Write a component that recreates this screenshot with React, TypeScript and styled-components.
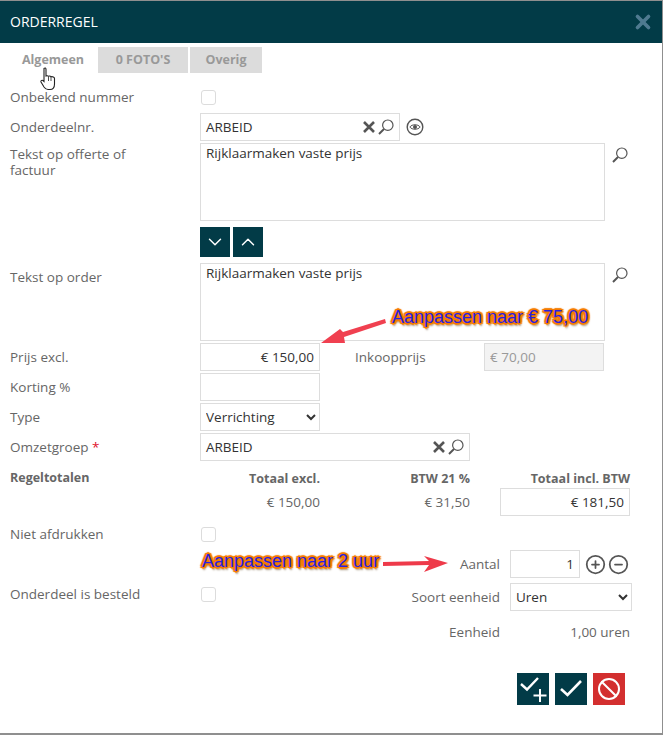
import React from 'react';

import { Ban, ChevronDown, ChevronUp, CirclePlus, CircleMinus, X } from 'lucide-react';
import { createGlobalStyle, styled } from 'styled-components';

const GlobalStyle = createGlobalStyle`
  html, body {
    margin: 0;
    padding: 0;
    background: #fff;
  }
  * {
    box-sizing: border-box;
  }
`;

const Dialog = styled.div`
  position: relative;
  width: 663px;
  height: 735px;
  overflow: hidden;
  background: #fff;
  border-top: 1px solid #8f8f8f;
  border-right: 1px solid #8f8f8f;
  border-bottom: 2px solid #8f8f8f;
  font-family: 'Open Sans', 'Noto Sans', sans-serif;
  font-size: 13.5px;
  color: #666;
`;

const Header = styled.div`
  height: 42px;
  background: #023b47;
  color: #fff;
  display: flex;
  align-items: center;
  justify-content: space-between;
  padding: 0 8px 1px 10px;
  font-size: 14px;
`;

const CloseIcon = styled(X)`
  color: #4f7a90;
`;

const Tabs = styled.div`
  display: flex;
  gap: 2px;
  padding: 4px 0 0 10px;
  height: 40px;
`;

const Tab = styled.div<{ $active?: boolean; $w: number }>`
  width: ${({ $w }) => $w}px;
  height: 26px;
  padding-bottom: 1px;
  display: flex;
  align-items: center;
  justify-content: center;
  font-size: 12.5px;
  font-weight: 700;
  color: #999;
  background: ${({ $active }) => ($active ? '#fff' : '#dcdcdc')};
`;

const Form = styled.div`
  display: flex;
  flex-direction: column;
`;

const Row = styled.div<{ $top?: number; $h?: number }>`
  display: flex;
  align-items: center;
  height: ${({ $h }) => $h ?? 28}px;
  margin-top: ${({ $top }) => $top ?? 2}px;
`;

const TallRow = styled.div<{ $top: number }>`
  display: flex;
  align-items: flex-start;
  margin-top: ${({ $top }) => $top}px;
`;

const Label = styled.div<{ $bold?: boolean }>`
  flex: 0 0 200px;
  padding-left: 10px;
  line-height: 16px;
  font-weight: ${({ $bold }) => ($bold ? 700 : 400)};
  font-size: ${({ $bold }) => ($bold ? '12.5px' : '13.5px')};
`;

const TallLabel = styled(Label)<{ $pad: number }>`
  padding-top: ${({ $pad }) => $pad}px;
  padding-right: 50px;
`;

const RaisedLabel = styled(Label)`
  margin-bottom: 6px;
`;

const Required = styled.span`
  color: #e0102a;
`;

const Checkbox = styled.span<{ $raised?: boolean }>`
  width: 15px;
  height: 15px;
  border: 1px solid #dcdcdc;
  border-radius: 3px;
  margin-left: 1px;
  margin-bottom: ${({ $raised }) => ($raised ? 6 : 0)}px;
`;

const Input = styled.input<{ $w: number; $disabled?: boolean }>`
  width: ${({ $w }) => $w}px;
  height: 28px;
  padding: 0 5px;
  border: 1px solid #ddd;
  outline: none;
  text-align: ${({ $disabled }) => ($disabled ? 'left' : 'right')};
  font: inherit;
  color: ${({ $disabled }) => ($disabled ? '#999' : '#333')};
  background: ${({ $disabled }) => ($disabled ? '#f3f3f3' : '#fff')};
`;

const LookupBox = styled.div<{ $w: number }>`
  width: ${({ $w }) => $w}px;
  height: 28px;
  padding: 0 5px;
  border: 1px solid #ddd;
  display: flex;
  align-items: center;
  gap: 3px;
  color: #333;
`;

const LookupValue = styled.span`
  flex: 1;
`;

const TextArea = styled.textarea`
  width: 405px;
  height: 78px;
  padding: 0 5px;
  border: 1px solid #ddd;
  outline: none;
  resize: none;
  font: inherit;
  line-height: 18px;
  color: #333;
`;

const Select = styled.select<{ $w: number }>`
  width: ${({ $w }) => $w}px;
  height: 28px;
  padding: 0 1px;
  border: 1px solid #ddd;
  border-radius: 0;
  outline: none;
  background: #fff;
  font: inherit;
  color: #333;
`;

const IconSlot = styled.span<{ $left?: number; $top?: number }>`
  display: inline-flex;
  color: #555;
  margin-left: ${({ $left }) => $left ?? 0}px;
  margin-top: ${({ $top }) => $top ?? 0}px;
`;

const MoveButtons = styled.div`
  display: flex;
  gap: 3px;
  margin: 6px 0 6px 200px;
`;

const DarkButton = styled.button<{ $size: number; $red?: boolean }>`
  width: ${({ $size }) => $size}px;
  height: ${({ $size }) => $size}px;
  padding: 0;
  border: none;
  display: flex;
  align-items: center;
  justify-content: center;
  color: #fff;
  background: ${({ $red }) => ($red ? '#d32f2f' : '#023b47')};
`;

const InlineLabel = styled.span`
  width: 164px;
  padding-left: 35px;
`;

const Cell = styled.div<{ $w: number; $bold?: boolean }>`
  width: ${({ $w }) => $w}px;
  text-align: right;
  font-weight: ${({ $bold }) => ($bold ? 700 : 400)};
  font-size: ${({ $bold }) => ($bold ? '12.5px' : '13.5px')};
`;

const EndLabel = styled.div`
  flex: 1;
  text-align: right;
  padding-right: 10px;
`;

const SideField = styled.div`
  width: 150px;
  margin-right: 2px;
  display: flex;
  align-items: center;
  gap: 3px;
`;

const EndValue = styled.div`
  width: 120px;
  text-align: right;
`;

const Actions = styled.div`
  display: flex;
  justify-content: flex-end;
  gap: 6px;
  margin: 27px 37px 0 0;
`;

const Annotation = styled.div<{ $x: number; $y: number }>`
  position: absolute;
  left: ${({ $x }) => $x}px;
  top: ${({ $y }) => $y}px;
  font-family: 'Liberation Sans', Arial, sans-serif;
  font-size: 18px;
  line-height: 20px;
  white-space: nowrap;
  color: #2a1fe0;
  text-shadow:
    1px 0 0 #f57c00, -1px 0 0 #f57c00, 0 1px 0 #f57c00, 0 -1px 0 #f57c00,
    1px 1px 0 #f57c00, -1px 1px 0 #f57c00, 1px -1px 0 #f57c00, -1px -1px 0 #f57c00,
    2px 1px 1px #f57c00, -2px 1px 1px #f57c00, 2px -1px 1px #f57c00, -2px -1px 1px #f57c00,
    0 2px 1px #f57c00, 0 -2px 1px #f57c00, 1px 3px 2px #9a8a70;
`;

const Overlay = styled.svg`
  position: absolute;
  overflow: visible;
  pointer-events: none;
`;

const SearchIcon = () => (
  <svg width='16' height='16' viewBox='0 0 16 16' fill='none' stroke='currentColor'>
    <circle cx='9.8' cy='6.2' r='5.2' strokeWidth='1.2' />
    <path d='M6 10 L1 15' strokeWidth='1.9' />
  </svg>
);

const ClearIcon = () => (
  <svg width='12' height='12' viewBox='0 0 12 12' fill='none' stroke='#555' strokeWidth='2.6'>
    <path d='M1 1 L11 11 M11 1 L1 11' />
  </svg>
);

const EyeIcon = () => (
  <svg width='18' height='18' viewBox='0 0 18 18' fill='none' stroke='currentColor'>
    <circle cx='9' cy='9' r='7.8' strokeWidth='1.4' />
    <path d='M3.8 9 C6 6 12 6 14.2 9 C12 12 6 12 3.8 9 Z' strokeWidth='1' />
    <circle cx='9' cy='9' r='2' fill='currentColor' stroke='none' />
  </svg>
);

const CheckPlusIcon = () => (
  <svg width='32' height='32' viewBox='0 0 32 32' fill='none' stroke='#fff' strokeWidth='2.4'>
    <path d='M4 11 L10 16.5 L21 5' />
    <path d='M23 16 V29 M16.5 22.5 H29.5' strokeWidth='2' />
  </svg>
);

const CheckIcon = () => (
  <svg width='32' height='32' viewBox='0 0 32 32' fill='none' stroke='#fff' strokeWidth='2.6'>
    <path d='M6 16 L12.5 22 L26 8' />
  </svg>
);

const HandCursor = () => (
  <Overlay width='18' height='24' viewBox='0 0 16 24' style={{ left: 39, top: 66 }}>
    <path
      d='M4 1.5 C5 .6 6 1 6 2.5 V9 C7 8.6 8 8.7 8.5 9.3 C9.5 8.9 10.5 9.1 11 9.8 C12.5 9.4 14.5 10 14.5 11.5 V17 C14.5 20 13 22.5 10 22.5 H8 C6 22.5 5 21.5 4 20 L1 15 C.5 14 1.5 12.6 3 13.5 L4 14.5 Z'
      fill='#fff'
      stroke='#222'
      strokeWidth='1.1'
    />
    <path d='M8.5 10 V14 M11 10 V14' stroke='#222' strokeWidth='.8' />
  </Overlay>
);

const ArrowPrice = () => (
  <Overlay width='70' height='26' viewBox='0 0 70 26' style={{ left: 319, top: 316 }}>
    <path d='M66 2 L24 15 L21 12 L2 26 L26 26 L25 20 L67 6 Z' fill='#f04050' />
  </Overlay>
);

const ArrowAmount = () => (
  <Overlay width='68' height='18' viewBox='0 0 68 18' style={{ left: 382, top: 553 }}>
    <path d='M1 8 L47 7 L42 2 L66 9 L42 18 L47 11 L1 12 Z' fill='#ee3a4a' />
  </Overlay>
);

/**
 * Order line dialog with the general tab opened.
 */
export default function App() {
  return (
    <Dialog>
      <GlobalStyle />
      <Header>
        <span>ORDERREGEL</span>
        <CloseIcon size={22} strokeWidth={4} />
      </Header>

      <Tabs>
        <Tab $active $w={86}>Algemeen</Tab>
        <Tab $w={90}>0 FOTO'S</Tab>
        <Tab $w={72}>Overig</Tab>
      </Tabs>

      <Form>
        <Row $top={0}>
          <Label>Onbekend nummer</Label>
          <Checkbox />
        </Row>
        <Row>
          <Label>Onderdeelnr.</Label>
          <LookupBox $w={200}>
            <LookupValue>ARBEID</LookupValue>
            <ClearIcon />
            <IconSlot><SearchIcon /></IconSlot>
          </LookupBox>
          <IconSlot $left={6}><EyeIcon /></IconSlot>
        </Row>
        <TallRow $top={2}>
          <TallLabel $pad={3}>Tekst op offerte of factuur</TallLabel>
          <TextArea readOnly defaultValue='Rijklaarmaken vaste prijs' />
          <IconSlot $left={7} $top={4}><SearchIcon /></IconSlot>
        </TallRow>
        <MoveButtons>
          <DarkButton $size={30}><ChevronDown size={22} strokeWidth={1.6} /></DarkButton>
          <DarkButton $size={30}><ChevronUp size={22} strokeWidth={1.6} /></DarkButton>
        </MoveButtons>
        <TallRow $top={0}>
          <TallLabel $pad={6}>Tekst op order</TallLabel>
          <TextArea readOnly defaultValue='Rijklaarmaken vaste prijs' />
          <IconSlot $left={7} $top={4}><SearchIcon /></IconSlot>
        </TallRow>
        <Row>
          <Label>Prijs excl.</Label>
          <Input $w={120} readOnly defaultValue='€ 150,00' />
          <InlineLabel>Inkoopprijs</InlineLabel>
          <Input $w={120} $disabled readOnly defaultValue='€ 70,00' />
        </Row>
        <Row>
          <Label>Korting %</Label>
          <Input $w={120} readOnly />
        </Row>
        <Row>
          <Label>Type</Label>
          <Select $w={120} defaultValue='Verrichting'>
            <option>Verrichting</option>
          </Select>
        </Row>
        <Row>
          <Label>Omzetgroep <Required>*</Required></Label>
          <LookupBox $w={270}>
            <LookupValue>ARBEID</LookupValue>
            <ClearIcon />
            <IconSlot><SearchIcon /></IconSlot>
          </LookupBox>
        </Row>
        <Row $top={6} $h={22}>
          <Label $bold>Regeltotalen</Label>
          <Cell $w={120} $bold>Totaal excl.</Cell>
          <Cell $w={150} $bold>BTW 21 %</Cell>
          <Cell $w={160} $bold>Totaal incl. BTW</Cell>
        </Row>
        <Row $top={-1}>
          <Label />
          <Cell $w={120}>€ 150,00</Cell>
          <Cell $w={150}>€ 31,50</Cell>
          <Cell $w={30} />
          <Input $w={130} readOnly defaultValue='€ 181,50' />
        </Row>
        <Row $top={4}>
          <Label>Niet afdrukken</Label>
          <Checkbox />
        </Row>
        <Row>
          <EndLabel>Aantal</EndLabel>
          <SideField>
            <Input $w={70} readOnly defaultValue='1' />
            <IconSlot $left={2}><CirclePlus size={21} strokeWidth={2} /></IconSlot>
            <IconSlot $left={-1}><CircleMinus size={21} strokeWidth={2} /></IconSlot>
          </SideField>
        </Row>
        <Row $top={5}>
          <RaisedLabel>Onderdeel is besteld</RaisedLabel>
          <Checkbox $raised />
          <EndLabel>Soort eenheid</EndLabel>
          <SideField>
            <Select $w={122} defaultValue='Uren'>
              <option>Uren</option>
            </Select>
          </SideField>
        </Row>
        <Row $top={7}>
          <EndLabel>Eenheid</EndLabel>
          <SideField>
            <EndValue>1,00 uren</EndValue>
          </SideField>
        </Row>
        <Actions>
          <DarkButton $size={32}><CheckPlusIcon /></DarkButton>
          <DarkButton $size={32}><CheckIcon /></DarkButton>
          <DarkButton $size={32} $red><Ban size={24} strokeWidth={2} /></DarkButton>
        </Actions>
      </Form>

      <HandCursor />
      <ArrowPrice />
      <ArrowAmount />
      <Annotation $x={392} $y={306}>Aanpassen naar € 75,00</Annotation>
      <Annotation $x={202} $y={550}>Aanpassen naar 2 uur</Annotation>
    </Dialog>
  );
}
